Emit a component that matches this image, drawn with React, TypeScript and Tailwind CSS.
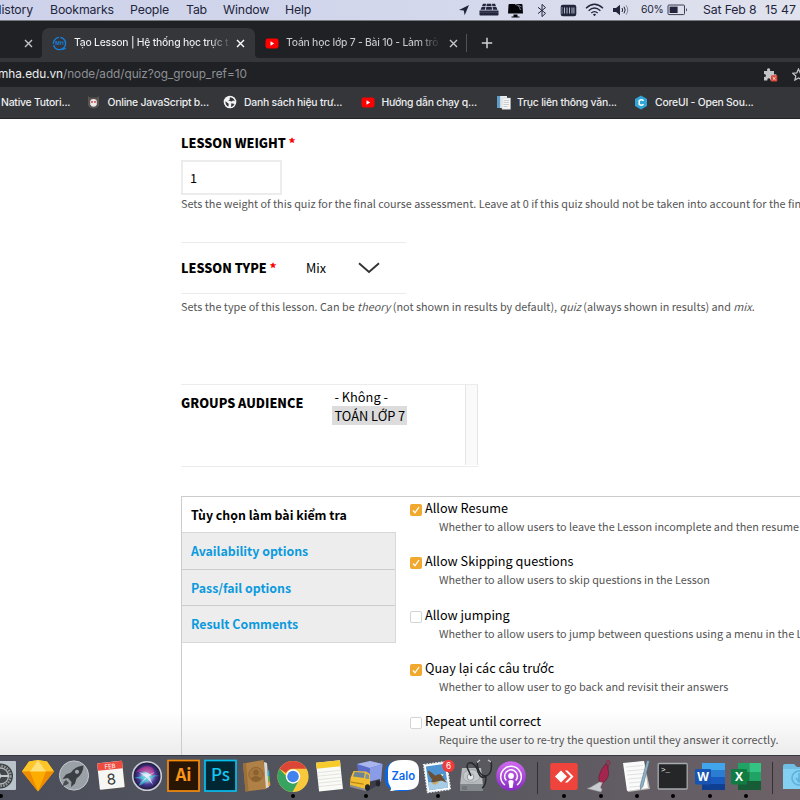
import type { ReactNode } from 'react';

const INTER = 'font-[Inter,sans-serif]';
const SOURCE = "font-['Noto_Sans_CJK_SC',sans-serif]";

/* ---------- macOS menu bar ---------- */

function MenuBar() {
  return (
    <div className={`${INTER} flex h-[20px] shrink-0 items-center overflow-hidden whitespace-nowrap bg-gradient-to-r from-[#cdd2ea] via-[#d3d7ec] to-[#e0e2ed] text-[12.3px] tracking-[-0.16px] text-[#22253c]`}>
      <span className="flex w-[50px] shrink-0"><span className="flex w-[33px] justify-end">History</span></span>
      <span className="w-[80px] shrink-0">Bookmarks</span>
      <span className="w-[56px] shrink-0">People</span>
      <span className="w-[37px] shrink-0">Tab</span>
      <span className="w-[62px] shrink-0">Window</span>
      <span className="w-[172px] shrink-0">Help</span>
      <svg className="mr-[9px] h-[14px] w-[13px] shrink-0" viewBox="0 0 13 14">
        <path d="M12 2 L2 7 L6.7 7.6 L7.7 12.3 Z" fill="#22253c" />
      </svg>
      <svg className="mr-[8px] h-[14px] w-[20px] shrink-0" viewBox="0 0 20 14" fill="#22253c">
        <path d="M4 .8h3l-.4 2.4H3zM7.8 .8h4.4l.4 2.4H7.400z M13 .8h3l1 2.400h-3.600zM2.700 3.900h3.800l-.5 2.900H1.500zM7.300 3.900h5.400l.4 2.900H6.900zM13.500 3.900h3.800l1.200 2.900H14z" />
        <path d="M.5 7.600h19v4.200q0 .8-.8 .8H1.300q-.8 0-.8-.8z" />
        <path d="M1 9.200h18" stroke="#565a72" strokeWidth=".6" />
      </svg>
      <svg className="h-[15px] w-[17px] shrink-0" viewBox="0 0 17 15">
        <path d="M6.500 11.500h4v2h2v1h-8v-1h2z" fill="#050509" />
        <path d="M1 10.500L1.500 2q0-1 1-1h12q1 0 1 1l.5 8.500z" fill="#050509" />
        <path d="M8 1.500q4 0 5.500 5.500M11 2l3.500 2" fill="none" stroke="#b4b8c8" strokeWidth=".7" />
      </svg>
      <svg className="ml-[13px] h-[15px] w-[10px] shrink-0" viewBox="0 0 10 15" fill="none" stroke="#22253c" strokeWidth="1">
        <path d="M1 4.300l7.500 6L5 13.600V1.400l3.500 3.200L1 10.600" />
      </svg>
      <svg className="ml-[13px] h-[13px] w-[17px] shrink-0" viewBox="0 0 17 13">
        <rect x=".7" y=".8" width="15.600" height="11.400" rx="2.200" fill="#22253c" />
        <path d="M4.500 3.500v6M7 3.500v6M9.500 3.500v6M12 3.500v6M13.900 3.500v6" stroke="#c5c9dc" strokeWidth=".9" />
        <path d="M2 3v7" stroke="#c5c9dc" strokeWidth=".6" />
      </svg>
      <svg className="ml-[8px] h-[14px] w-[19px] shrink-0" viewBox="0 0 19 14" fill="none" stroke="#22253c" strokeWidth="1.300">
        <path d="M1 5.200Q9.500-2.600 18 5.200M3.600 7.700Q9.500 2.300 15.400 7.700M6.300 10.100Q9.500 7.200 12.700 10.100" />
        <path d="M7.900 11.600Q9.500 10.100 11.100 11.600L9.500 13.300z" fill="#22253c" stroke="none" />
      </svg>
      <svg className="ml-[8px] h-[12px] w-[17px] shrink-0" viewBox="0 0 17 12">
        <path d="M1 4h3l4-3.200v10.400L4 8H1z" fill="#22253c" />
        <path d="M10 4q1.300 2 0 4M12 2.700q2.400 3.300 0 6.600" fill="none" stroke="#22253c" strokeWidth="1" />
        <path d="M14 1.300q3.600 4.700 0 9.400" fill="none" stroke="#6c7084" strokeWidth=".8" />
      </svg>
      <span className="ml-[12px] w-[26px] shrink-0 text-[10.400px] tracking-[-0.2px]">60%</span>
      <svg className="h-[12px] w-[22px] shrink-0" viewBox="0 0 22 12">
        <rect x="1" y="1" width="16.500" height="9.600" rx="1" fill="none" stroke="#3a3d50" />
        <rect x="2.600" y="2.600" width="8" height="6.400" fill="#22253c" />
        <path d="M19 4q2 1.800 0 3.600z" fill="#3a3d50" />
      </svg>
      <span className="ml-[14px] w-[62px] shrink-0">Sat Feb 8</span>
      <span className="shrink-0 tracking-[0]">15 47</span>
    </div>
  );
}

/* ---------- Chrome window ---------- */

function Cross({ color }: { color: string }) {
  return (
    <svg className="h-[9px] w-[9px] shrink-0" viewBox="0 0 9 9">
      <path d="M1 1l7 7M8 1L1 8" stroke={color} strokeWidth="1.400" />
    </svg>
  );
}

function YouTube() {
  return (
    <svg className="h-[11px] w-[14px] shrink-0" viewBox="0 0 14 11">
      <rect x=".5" y=".6" width="13" height="9.800" rx="2.300" fill="#f00" />
      <path d="M5.500 3.300v4.400l3.700-2.200z" fill="#fff" />
    </svg>
  );
}

function TabStrip() {
  return (
    <div className={`${INTER} flex h-[37px] shrink-0 items-end overflow-hidden whitespace-nowrap bg-[#202124] text-[10.400px] font-medium tracking-[-0.23px]`}>
      <div className="flex h-[30px] w-[38px] shrink-0 items-center pl-[24px]"><Cross color="#c4c6c9" /></div>
      <svg className="h-[30px] w-[4px] shrink-0" viewBox="0 0 4 30"><path d="M0 30q4 0 4-4v4z" fill="#35363a" /></svg>
      <div className="flex h-[30px] w-[213px] shrink-0 items-center rounded-t-[7px] bg-[#35363a] pl-[10px] text-[#f1f3f4]">
        <svg className="h-[15px] w-[15px] shrink-0" viewBox="0 0 15 15">
          <circle cx="7.500" cy="7.500" r="6.100" fill="none" stroke="#1583e0" strokeWidth="1.400" strokeDasharray="17 1.500 9 1.500" />
          <path d="M10.500 13.700l3.300-1.500" stroke="#1583e0" strokeWidth="1.200" />
          <text x="7.500" y="9.400" fontSize="5" fontWeight="600" textAnchor="middle" fill="#1583e0" fontFamily="Inter" letterSpacing="0">MH</text>
        </svg>
        <div className="ml-[7px] w-[156px] overflow-hidden bg-gradient-to-r from-[#f1f3f4] from-[86%] to-[#45464a] bg-clip-text leading-[18px] text-transparent">Tạo Lesson | Hệ thống học trực t</div>
        <div className="ml-[6px]"><Cross color="#ffffff" /></div>
      </div>
      <svg className="h-[30px] w-[4px] shrink-0" viewBox="0 0 4 30"><path d="M4 30q-4 0-4-4v4z" fill="#35363a" /></svg>
      <div className="flex h-[30px] w-[208px] shrink-0 items-center pl-[6px]">
        <YouTube />
        <div className="ml-[7px] w-[156px] overflow-hidden bg-gradient-to-r from-[#c8cace] from-[84%] to-[#202124] bg-clip-text leading-[18px] text-transparent">Toán học lớp 7 - Bài 10 - Làm trò</div>
        <div className="ml-[7px]"><Cross color="#c4c6c9" /></div>
        <div className="ml-[8px] h-[18px] w-px bg-[#505256]" />
      </div>
      <div className="flex h-[30px] items-center pl-[14px]">
        <svg className="h-[12px] w-[12px]" viewBox="0 0 12 12"><path d="M6 .8v10.400M.8 6h10.400" stroke="#d0d2d5" strokeWidth="1.500" /></svg>
      </div>
    </div>
  );
}

function AddressBar() {
  return (
    <div className={`${INTER} flex h-[29px] shrink-0 items-center overflow-hidden border-t-[4px] border-[#35363a] bg-[#202124] text-[11.800px] tracking-[-0.05px]`}>
      <div className="flex w-[63px] shrink-0 justify-end text-[#eceef0]">mha.edu.vn</div>
      <div className="w-[700px] shrink-0 text-[#8d9095]">/node/add/quiz?og_group_ref=10</div>
      <svg className="h-[16px] w-[16px] shrink-0" viewBox="0 0 16 16">
        <path d="M1 4h3.200Q3.500 1.200 5.600 1.200T7 4H11v3.500q2.600-.6 2.600 1.300T11 10.200V13.500H7.500q.2-2.300-1.600-2.300T4.300 13.500H1V10q2 0 2-1.500T1 7z" fill="#c2c4c7" />
        <rect x="8" y="8.300" width="6.300" height="6.300" rx=".8" fill="#db4437" />
        <path d="M9.700 10l2.900 2.900M12.600 10L9.700 12.900" stroke="#fff" strokeWidth=".8" />
      </svg>
      <svg className="ml-[13px] h-[13px] w-[13px] shrink-0" viewBox="0 0 14 14">
        <path d="M7 1l1.800 4.200 4.500.4-3.400 3 1 4.400L7 10.700 3.100 13l1-4.400-3.400-3 4.500-.4z" fill="none" stroke="#c2c4c7" strokeWidth="1.300" />
      </svg>
    </div>
  );
}

function Bookmark({ icon, label, width }: { icon: ReactNode; label: string; width: string }) {
  return (
    <div className={`flex shrink-0 items-center ${width}`}>
      <span className="flex w-[21px] shrink-0 items-center">{icon}</span>
      {label}
    </div>
  );
}

function BookmarksBar() {
  return (
    <div className={`${INTER} flex h-[32px] shrink-0 items-center overflow-hidden whitespace-nowrap border-b border-[#232427] bg-[#35363a] text-[10.400px] font-medium tracking-[-0.22px] text-[#eceef0]`}>
      <div className="w-[86.5px] shrink-0 pl-px">Native Tutori...</div>
      <Bookmark width="w-[136.5px]" label="Online JavaScript b..." icon={
        <svg className="h-[14px] w-[13px]" viewBox="0 0 13 14">
          <path d="M1 1l2 1.500h7L12 1v9.500q-2 3-5.500 3T1 10.500z" fill="#5a5350" />
          <path d="M3.200 6.500q0-2.500 3.300-2.500t3.300 2.500v3q-1 2.300-3.300 2.300T3.200 9.500z" fill="#ece9e9" />
          <circle cx="5" cy="6.900" r=".9" fill="#c72b35" /><circle cx="8" cy="6.900" r=".9" fill="#c72b35" />
        </svg>
      } />
      <Bookmark width="w-[137.5px]" label="Danh sách hiệu trư..." icon={
        <svg className="h-[14px] w-[14px]" viewBox="0 0 14 14">
          <circle cx="7" cy="7" r="6.300" fill="#f1f3f4" />
          <path d="M2.300 6.200l3.400 2.600-.2 2.800q-3-1-3.200-5.400zM7 2.200q-1 1.300.2 2l-2 1.300 3.600 1.100 1.200-1.100 1.800.8Q11 2.600 7 2.200zM8.300 8.300l3.200.7q-1.200 2.600-3.500 3z" fill="#35363a" />
        </svg>
      } />
      <Bookmark width="w-[135.5px]" label="Hướng dẫn chạy q..." icon={<YouTube />} />
      <Bookmark width="w-[138px]" label="Trục liên thông văn..." icon={
        <svg className="h-[15px] w-[16px]" viewBox="0 0 16 15">
          <path d="M1 1h10v12H1z" fill="#e9eef2" /><path d="M1 1h3.200v12H1z" fill="#5f9cc8" />
          <path d="M6 3h8.500v11.300H6z" fill="#f5f5f3" stroke="#b9bcc0" strokeWidth=".5" />
          <path d="M7.500 5.500h5.500M7.500 7.500h5.500M7.500 9.500h5.500M7.500 11.500h4" stroke="#b9bcc0" strokeWidth=".7" />
        </svg>
      } />
      <Bookmark width="w-[140px]" label="CoreUI - Open Sou..." icon={
        <svg className="h-[15px] w-[14px]" viewBox="0 0 14 15">
          <path d="M7 .5l6 3.500v7L7 14.500 1 11V4z" fill="#2fa5d8" />
          <path d="M9.600 5.700Q7.500 3.800 5.200 5.600v3.800q2.300 1.800 4.400-.1" fill="none" stroke="#fff" strokeWidth="1.500" />
        </svg>
      } />
    </div>
  );
}

/* ---------- Quiz form ---------- */

function Heading({ children, required }: { children: ReactNode; required?: boolean }) {
  return (
    <div className="text-[12.600px] font-black leading-[18px] text-black">
      {children}
      {required && <span className="ml-[3px] text-[#f00]">*</span>}
    </div>
  );
}

const options = [
  { label: 'Allow Resume', hint: 'Whether to allow users to leave the Lesson incomplete and then resume', checked: true },
  { label: 'Allow Skipping questions', hint: 'Whether to allow users to skip questions in the Lesson', checked: true },
  { label: 'Allow jumping', hint: 'Whether to allow users to jump between questions using a menu in the L', checked: false },
  { label: 'Quay lại các câu trước', hint: 'Whether to allow user to go back and revisit their answers', checked: true },
  { label: 'Repeat until correct', hint: 'Require the user to re-try the question until they answer it correctly.', checked: false },
];

function Option({ label, hint, checked }: { label: string; hint: string; checked: boolean }) {
  return (
    <div className="h-[53.4px] shrink-0">
      <div className="flex h-[20px] items-center text-[12.700px] leading-[20px] text-black">
        {checked ? (
          <span className="mr-[3px] mt-[4px] flex h-[12px] w-[12px] items-center justify-center rounded-[2px] bg-[#f1a82e]">
            <svg className="h-[10px] w-[10px]" viewBox="0 0 10 10"><path d="M2 5.500l2 2.300L8 2" fill="none" stroke="#fff" strokeWidth="1.300" /></svg>
          </span>
        ) : (
          <span className="mr-[3px] mt-[4px] h-[12px] w-[12px] rounded-[2px] border border-[#d4d4d4] bg-white" />
        )}
        {label}
      </div>
      <div className="pl-[29px] text-[10.820px] leading-[16px] text-[#555]">{hint}</div>
    </div>
  );
}

function QuizForm() {
  return (
    <div className={`${SOURCE} flex h-[636px] shrink-0 flex-col overflow-hidden whitespace-nowrap bg-gradient-to-b from-white from-[93%] to-[#ececec] pl-[181px] pt-[15px]`}>
      <div className="h-[26px] shrink-0"><Heading required>LESSON WEIGHT</Heading></div>
      <div className="flex h-[35px] w-[101px] shrink-0 items-center border-2 border-[#ececec] bg-white pl-[7px] text-[12.700px] text-black">1</div>
      <div className="h-[47px] shrink-0 text-[10.820px] leading-[16px] text-[#555]">Sets the weight of this quiz for the final course assessment. Leave at 0 if this quiz should not be taken into account for the final result</div>
      <div className="flex h-[52px] w-[225px] shrink-0 items-center border-y border-[#ececec]">
        <div className="w-[125px]"><Heading required>LESSON TYPE</Heading></div>
        <div className="w-[52px] text-[12.700px] leading-[18px] text-black">Mix</div>
        <svg className="h-[12px] w-[22px]" viewBox="0 0 22 12"><path d="M1 1.200l10 8.800 10-8.800" fill="none" stroke="#333" strokeWidth="1.900" /></svg>
      </div>
      <div className="mt-[4px] h-[86px] shrink-0 text-[10.820px] leading-[16px] text-[#555]">
        Sets the type of this lesson. Can be <i>theory</i> (not shown in results by default), <i>quiz</i> (always shown in results) and <i>mix</i>.
      </div>
      <div className="flex h-[83px] w-[297px] shrink-0 border-y border-[#ececec]">
        <div className="w-[151px] pt-[9px]"><Heading>GROUPS AUDIENCE</Heading></div>
        <div className="w-[133px] pt-[3px] text-[12.800px] leading-[19px] text-black">
          <div className="h-[18px] pl-[2.500px] leading-[18px]">- Không -</div>
          <div className="w-[75px] bg-[#dcdcdc] pl-[2.500px]">TOÁN LỚP 7</div>
        </div>
        <div className="h-[80px] w-[13px] border-x border-[#e6e6e6] bg-[#fafafa]" />
      </div>
      <div className="mt-[29px] flex h-[300px] w-[640px] shrink-0 border-l border-t border-[#ccc]">
        <div className="w-[214px] text-[12.350px] font-bold">
          <div className="h-[35px] pl-[9px] leading-[36px] text-black">Tùy chọn làm bài kiểm tra</div>
          <div className="border-y border-r border-[#d8d8d8] bg-[#ededed] text-[#0b9ade]">
            <div className="h-[37px] border-b border-[#ccc] pl-[9px] leading-[36px]">Availability options</div>
            <div className="h-[36px] border-b border-[#ccc] pl-[9px] leading-[36px]">Pass/fail options</div>
            <div className="h-[36px] pl-[9px] leading-[36px]">Result Comments</div>
          </div>
        </div>
        <div className="pl-[14px] pt-[0.8px]">
          {options.map((option) => <Option key={option.label} {...option} />)}
        </div>
      </div>
    </div>
  );
}

/* ---------- Dock ---------- */

function Slot({ children, running }: { children: ReactNode; running?: boolean }) {
  return (
    <div className="flex h-[44px] w-[36.450px] shrink-0 flex-col items-center pt-[2px]">
      <svg className="h-[36px] w-[36px] shrink-0" viewBox="0 0 36 36">{children}</svg>
      {running && <span className="h-[4px] w-[4px] rounded-full bg-black" />}
    </div>
  );
}

function Divider() {
  return <div className="mx-[7.700px] mt-[6px] h-[32px] w-px shrink-0 bg-[#2f3136]" />;
}

function Dock() {
  return (
    <div className="flex h-[45px] shrink-0 overflow-hidden border-t border-[#35383e] bg-gradient-to-r from-[#4b4e5a] via-[#55565e] to-[#6c6167]">
      <div className="-ml-[17px] flex shrink-0">
        <Slot running>
          <rect x="3" y="3" width="30" height="29" rx="1" fill="#b9c3c9" />
          <circle cx="17.500" cy="18" r="12.500" fill="#3c3f42" />
          <circle cx="17.500" cy="18" r="10" fill="none" stroke="#8f9497" strokeWidth="2.500" strokeDasharray="1.800 1" />
          <circle cx="17.500" cy="18" r="8" fill="#44474a" stroke="#b4b8bb" strokeWidth="1.300" />
          <path d="M17.500 18h8M17.500 18l-4-7M17.500 18l-4 7" stroke="#c3c7ca" strokeWidth="2" />
        </Slot>
        <Slot>
          <path d="M9 3.500L18 2l9 1.500 7 10L18 33.500 2 13.500z" fill="#fdad00" />
          <path d="M9 3.500L18 2 10 13.500H2z" fill="#ffc629" /><path d="M18 2l9 1.500 7 10h-8z" fill="#ffc629" />
          <path d="M18 2l8 11.500H10z" fill="#ffe177" /><path d="M2 13.500h8l8 20z" fill="#ed8c00" />
          <path d="M34 13.500h-8l-8 20z" fill="#ed8c00" />
        </Slot>
        <Slot>
          <circle cx="18" cy="17.500" r="14.600" fill="#9ba2a7" stroke="#c1c8cd" strokeWidth="1" />
          <path d="M27.500 7.500q-8 .5-12.500 7l-5 2-3.500 4.500 5.500-1 3.500 4-.5 5 4-3.500 1.500-5q7-5 7-13z" fill="#3b3f44" />
          <circle cx="21" cy="13.800" r="2.100" fill="#a0a7ac" />
          <path d="M10 22q-3 2-3 6 4-.5 6-3z" fill="#4a4e53" />
        </Slot>
        <Slot>
          <g transform="rotate(-6 18 18)">
            <rect x="7" y="5" width="26" height="27" fill="#55514f" opacity=".6" />
            <rect x="5.500" y="4" width="25" height="26.500" rx="1" fill="#f6f6f5" />
            <path d="M5.500 4h25v7.500h-25z" fill="#ed4b40" />
            <text x="18" y="10.300" fontSize="6" textAnchor="middle" fill="#fff" fontFamily="Inter">FEB</text>
            <text x="18" y="26.500" fontSize="15" textAnchor="middle" fill="#3a3a3a" fontFamily="Inter">8</text>
          </g>
        </Slot>
        <Slot>
          <defs>
            <radialGradient id="siri"><stop offset="0" stopColor="#fff" /><stop offset=".25" stopColor="#a2ddea" /><stop offset=".6" stopColor="#4a3a9a" /><stop offset="1" stopColor="#17142c" /></radialGradient>
          </defs>
          <circle cx="18" cy="18" r="14.300" fill="url(#siri)" stroke="#c9ccd5" strokeWidth="1.600" />
          <path d="M7 14Q15 6 22 9q5 3 2 10-5-7-17-5z" fill="#d3388f" opacity=".65" />
          <path d="M5 20q8-3 13-1 7-3 12-1-7 0-11 4-5 4-9 6 1-5 5-7z" fill="#37ccd9" opacity=".7" />
          <path d="M10 14l9 3 7-3-6 4 4 9-6-7-6 5 5-6z" fill="#f1eaff" opacity=".8" />
        </Slot>
        <Slot>
          <rect x="3" y="2.500" width="31" height="30.500" fill="#291504" stroke="#f68b0a" strokeWidth="1.700" />
          <text x="18.500" y="23" fontSize="17" fontWeight="600" textAnchor="middle" fill="#fb9518" fontFamily="'Noto Sans CJK SC'">Ai</text>
        </Slot>
        <Slot>
          <rect x="3" y="2.500" width="31" height="30.500" fill="#022734" stroke="#05bfee" strokeWidth="1.700" />
          <text x="18.500" y="23" fontSize="17" fontWeight="500" textAnchor="middle" fill="#12c7f2" fontFamily="'Noto Sans CJK SC'">Ps</text>
        </Slot>
        <Slot>
          <path d="M26 4l3 1 2 24-4 2z" fill="#ddd7cd" /><path d="M29.500 12l1.500.5.5 5-2 1z" fill="#39b0dc" /><path d="M30 18h1.500l.5 5-2 1z" fill="#68b44d" /><path d="M30.500 23.500h1.500l.3 4-1.800.7z" fill="#f5a42c" />
          <path d="M5 5.500L25.500 2 28 31 7.500 33.500z" fill="#b08146" /><path d="M5 5.500l3-.5 2.500 28.200-3 .3z" fill="#9a7038" />
          <circle cx="18" cy="16.500" r="7.200" fill="#a5763d" stroke="#8d6431" strokeWidth=".9" />
          <circle cx="18" cy="14.500" r="2.700" fill="#8a6130" /><path d="M12.800 20.500q5.200-5 10.400 0-5.200 5-10.400 0z" fill="#8a6130" />
        </Slot>
        <Slot running>
          <circle cx="18" cy="18.500" r="15.600" fill="#f8c93c" />
          <path d="M4.500 10.700A15.600 15.600 0 0 1 31.500 10.700H18a8 8 0 0 0-7 4.300z" fill="#dc4637" />
          <path d="M4.500 10.700A15.600 15.600 0 0 0 17.500 34.100l6.500-12H18a8 8 0 0 1-6.500-3.500z" fill="#37a360" />
          <circle cx="18" cy="18.500" r="7.200" fill="#fff" /><circle cx="18" cy="18.500" r="5.800" fill="#4183ed" />
        </Slot>
        <Slot>
          <g transform="rotate(-6 18 18)">
            <rect x="6.500" y="3.500" width="24" height="29" fill="#fafaf7" /><path d="M6.500 3.500h24v6h-24z" fill="#f8cb2d" />
            <path d="M7 13.500h23M7 17h23M7 20.500h23M7 24h23M7 27.500h23" stroke="#d3d3cf" strokeWidth=".6" />
          </g>
        </Slot>
        <Slot running>
          <path d="M9 6l13-3 12.500 3-1.500 17-12 5-10-6z" fill="#5a6cc8" />
          <path d="M9 6l13-3 12.500 3L22 10z" fill="#a9b6ee" />
          <path d="M22 10l12.500-4L33 23l-11 5z" fill="#8b9ce6" />
          <path d="M12 26l20-5v5l-11 6z" fill="#3b3e48" />
          <path d="M2.500 20l3-7 12.500.5 4 2.500v12l-4 3.500L2 27z" fill="#f3bd30" />
          <path d="M5 18.500l1.800-4.500 10 .8-1 5.200z" fill="#6d8494" />
          <path d="M18 15.500l3 1.500v4l-4-.5z" fill="#7c93a2" />
          <path d="M3 23.500l12.500 2v1.200L3 24.700z" fill="#b98516" />
          <path d="M2 27l16 4v2L2 29z" fill="#8d8f94" />
          <ellipse cx="19.500" cy="29.500" rx="2.500" ry="3.300" fill="#22252a" /><ellipse cx="30" cy="25.500" rx="2.200" ry="3" fill="#22252a" />
        </Slot>
        <Slot>
          <rect x="1" y="3" width="32" height="30" rx="12" fill="#0268ee" />
          <path d="M18 2h5q12 0 12 11v8q0 11-12 11h-7q-5 0-8 1H6q2-2 0-5-2-3-2-7v-8Q4 2 18 2z" fill="#fff" />
          <text x="19.300" y="21.500" fontSize="11.300" fontWeight="600" textAnchor="middle" fill="#0968ef" fontFamily="Inter">Zalo</text>
        </Slot>
        <Slot running>
          <g transform="rotate(-8 17 19)">
            <rect x="5.500" y="5" width="23" height="28" fill="#fff" stroke="#e8edf1" strokeWidth="1.600" strokeDasharray="1.600 1.300" />
            <rect x="7.500" y="7" width="19" height="24" fill="#4e94d3" /><path d="M7.500 23h19v8h-19z" fill="#a8cce5" />
            <path d="M8.500 11q4 2 7 6.500l3-1 5 1-1 2.500 3.500 6-5-3-3 .5-5 .5-3-1q2-1 2-2-3-4-3.500-10z" fill="#6b5034" />
            <path d="M21 16.500l3 .7-1.500 2z" fill="#e7dfd0" /><path d="M11 25l5-1.500 2 1-4 2z" fill="#cda558" />
          </g>
          <circle cx="28.500" cy="8" r="6.200" fill="#ef3b39" />
          <text x="28.500" y="11" fontSize="8.300" textAnchor="middle" fill="#fff" fontFamily="Inter">6</text>
        </Slot>
        <Slot>
          <path d="M5 10h19l2 17v6H3v-6z" fill="#b6babd" /><path d="M3 26h23v7H3z" fill="#83888c" /><path d="M5 29h5M5 31h5" stroke="#5a5e62" strokeWidth=".8" />
          <ellipse cx="14.500" cy="18" rx="8.500" ry="6.300" fill="#c4c8ca" stroke="#969b9f" strokeWidth=".7" />
          <circle cx="13.500" cy="19" r="3.300" fill="#e4e6e7" stroke="#777" strokeWidth=".7" />
          <path d="M14 18L10 9q0-5 5-4 5 3 6 9 3 8 8 4" fill="none" stroke="#26292d" strokeWidth="1.500" />
          <path d="M20 4q1 14 9 14 7-2 5-15M29 18q0 10-4 12" fill="none" stroke="#26292d" strokeWidth="1.500" />
          <path d="M20 4.500l3-2.500M34 4l-3-2" stroke="#c5c9cc" strokeWidth="1.200" />
        </Slot>
        <Slot>
          <defs><linearGradient id="podcast" x1="0" x2="0" y1="0" y2="1"><stop stopColor="#d16af0" /><stop offset="1" stopColor="#862bc1" /></linearGradient></defs>
          <circle cx="18" cy="18" r="14.800" fill="url(#podcast)" />
          <g fill="none" stroke="#fff" strokeWidth="1.500"><path d="M12 27a10.300 10.300 0 1 1 12 0M13.300 22.600a6.400 6.400 0 1 1 9.400 0" /></g>
          <circle cx="18" cy="18" r="2.900" fill="#fff" /><path d="M15.300 23q2.700-2 5.400 0L19.500 30h-3z" fill="#fff" />
        </Slot>
        <Divider />
        <Slot running>
          <rect x="4.200" y="5" width="27.500" height="27" rx="2" fill="#ef443b" />
          <path d="M15 12.500l6 6-6 6-6-6zM18.800 12.500h2.700l6 6-6 6h-2.700l6-6z" fill="#fff" />
        </Slot>
        <Slot running>
          <path d="M23 4q4-3 4 2M26 6L18 29" fill="none" stroke="#97264b" strokeWidth="1.300" />
          <path d="M23.500 5q-6 6-7.500 13-.5 4 .5 6l4 .5q6-5 5-11-.5-4-2-8.500z" fill="#a4254e" stroke="#5f1c33" strokeWidth=".6" />
          <path d="M16.500 24l3 .5-2 5 1.500 2-1 2.500L4 30.500q4-1 6.500-3z" fill="#c9cccf" stroke="#8a8a8e" strokeWidth=".5" />
        </Slot>
        <Slot running>
          <path d="M5 6l20-3 6 28-22 3z" fill="#bdbeba" /><path d="M4 5l21-2 4 27-21 3z" fill="#fafafa" />
          <path d="M7 9l17-1.500M8 13l17-1.500M8 17l17-1.500M9 21l17-1.500M10 25l16-1.500M10 29l15-1" stroke="#d4d5d6" strokeWidth=".7" />
          <path d="M28 2.500l2.500.5-6.500 25-2.500 3.500-.2-4z" fill="#8fb0c6" stroke="#496476" strokeWidth=".5" />
        </Slot>
        <Slot running>
          <rect x="3.200" y="5.500" width="29" height="25.500" rx="1" fill="#242628" stroke="#a6abad" strokeWidth="1.300" />
          <text x="6" y="14" fontSize="7.500" fill="#fff" fontFamily="Liberation Mono">&gt;_</text>
        </Slot>
        <Slot running>
          <path d="M10 5h23v7H10z" fill="#41a5ee" /><path d="M10 12h23v7H10z" fill="#2b7cd3" /><path d="M10 19h23v7H10z" fill="#185abd" /><path d="M10 26h23v6H10z" fill="#103f91" />
          <rect x="3" y="11" width="16" height="15.500" rx="1" fill="#1755b4" />
          <text x="11" y="23" fontSize="12" fontWeight="700" textAnchor="middle" fill="#fff" fontFamily="Open Sans">W</text>
        </Slot>
        <Slot running>
          <path d="M10 5h11.500v9H10z" fill="#21a366" /><path d="M21.500 5H33v9H21.500z" fill="#33c481" /><path d="M10 14h11.500v9H10z" fill="#107c41" /><path d="M21.500 14H33v9H21.500z" fill="#21a366" /><path d="M10 23h23v9H10z" fill="#185c37" />
          <rect x="3" y="11" width="16" height="15.500" rx="1" fill="#107c41" />
          <text x="11" y="23" fontSize="12" fontWeight="700" textAnchor="middle" fill="#fff" fontFamily="Open Sans">X</text>
        </Slot>
        <Divider />
        <Slot>
          <path d="M2 8q0-2 2-2h9l3 3h18v22H2z" fill="#6fbee5" /><path d="M2 11h32v20H2z" fill="#83d0f3" />
          <circle cx="18" cy="20" r="7" fill="none" stroke="#5fb0da" strokeWidth="1.600" /><path d="M18 15v8M15 20l3 4 3-4" fill="none" stroke="#5fb0da" strokeWidth="1.600" />
        </Slot>
      </div>
    </div>
  );
}

export default function App() {
  return (
    <div className="flex h-[800px] w-[800px] flex-col overflow-hidden bg-white">
      <MenuBar />
      <div className="h-px shrink-0 bg-[#77797f]" />
      <TabStrip />
      <AddressBar />
      <BookmarksBar />
      <QuizForm />
      <Dock />
    </div>
  );
}
